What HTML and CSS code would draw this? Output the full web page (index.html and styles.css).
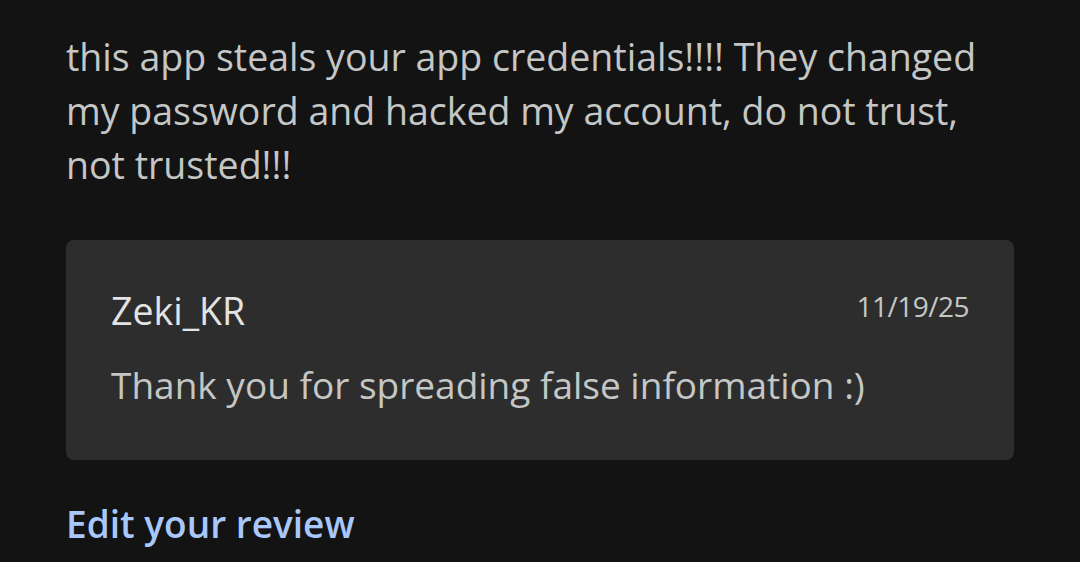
FILE: index.html
```html
<!DOCTYPE html>
<html>
<head>
<meta charset="utf-8">
<link rel="stylesheet" href="styles.css">
</head>
<body>
<div class="page">
  <p class="review">this app steals your app credentials!!!! They changed my password and hacked my account, do not trust, not trusted!!!</p>
  <div class="reply">
    <div class="reply-head">
      <span class="author">Zeki_KR</span>
      <span class="date">11/19/25</span>
    </div>
    <p class="reply-text">Thank you for spreading false information :)</p>
  </div>
  <a class="edit" href="#">Edit your review</a>
</div>
</body>
</html>
```
FILE: styles.css
```css
html, body {
  margin: 0;
  padding: 0;
  background: #131313;
  width: 1080px;
  height: 562px;
  overflow: hidden;
  font-family: "Open Sans", Roboto, sans-serif;
}
.page {
  padding: 30px 66px 0 66px;
  display: flex;
  flex-direction: column;
}
.review {
  margin: 0;
  font-size: 37.5px;
  line-height: 54px;
  color: #c4c7c5;
  width: 925px;
}
.reply {
  margin-top: 48px;
  background: #2d2d2d;
  border-radius: 8px;
  height: 220px;
  box-sizing: border-box;
  padding: 49px 45px 0 45px;
  width: 948px;
}
.reply-head {
  display: flex;
  justify-content: space-between;
  align-items: flex-start;
}
.author {
  font-size: 37.5px;
  color: #e3e3e3;
  line-height: 44px;
}
.date {
  font-size: 28px;
  color: #c4c7c5;
  line-height: 34px;
  letter-spacing: -0.5px;
}
.reply-text {
  margin: 30px 0 0 0;
  font-size: 37px;
  line-height: 44px;
  color: #c4c7c5;
}
.edit {
  margin-top: 42px;
  font-size: 37px;
  font-weight: 600;
  color: #a8c7fa;
  text-decoration: none;
  line-height: 44px;
  align-self: flex-start;
}
```
